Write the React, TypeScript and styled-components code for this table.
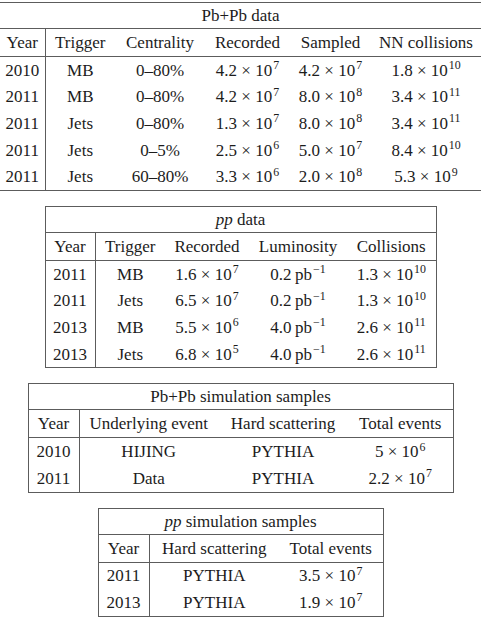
import { ReactNode } from 'react';
import styled, { createGlobalStyle } from 'styled-components';

const GlobalStyle = createGlobalStyle`
  html, body {
    margin: 0;
    padding: 0;
    background: #ffffff;
  }
  body {
    font-family: "Liberation Serif", "Times New Roman", serif;
    color: #1c1c1c;
  }
`;

const Page = styled.div`
  display: flex;
  flex-direction: column;
  align-items: center;
  gap: 15px;
  padding-top: 2px;
  width: 481px;
`;

const Table = styled.table<{ $open?: boolean }>`
  border-collapse: collapse;
  table-layout: fixed;
  font-size: 17px;
  line-height: 19px;
  border-top: 1px solid #5c5c5c;
  border-bottom: 1px solid #5c5c5c;
  border-left: ${(p) => (p.$open ? 'none' : '1px solid #5c5c5c')};
  border-right: ${(p) => (p.$open ? 'none' : '1px solid #5c5c5c')};
`;

const Col = styled.col<{ $w: number }>`
  width: ${(p) => p.$w}px;
`;

const Title = styled.td`
  height: 25px;
  padding: 0;
  text-align: center;
  vertical-align: middle;
  border-bottom: 1px solid #5c5c5c;
  white-space: nowrap;
`;

const Cell = styled.td<{ $divider?: boolean; $head?: boolean }>`
  height: ${(p) => (p.$head ? '27px' : '26.6px')};
  padding: 0;
  text-align: center;
  vertical-align: middle;
  white-space: nowrap;
  border-right: ${(p) => (p.$divider ? '1px solid #5c5c5c' : 'none')};
  border-bottom: ${(p) => (p.$head ? '1px solid #5c5c5c' : 'none')};
`;

const Sup = styled.sup`
  font-size: 0.7em;
  line-height: 0;
  vertical-align: 0.55em;
  margin-left: 1px;
`;

const Em = styled.i`
  font-style: italic;
`;

const sci = (m: string, e: string) => (
  <>
    {m} × 10<Sup>{e}</Sup>
  </>
);

const lumi = (v: string) => (
  <>
    {v}{'\u2009'}pb<Sup>−1</Sup>
  </>
);

type TableDef = {
  title: ReactNode;
  widths: number[];
  head: string[];
  rows: ReactNode[][];
  open?: boolean;
};

const tables: TableDef[] = [
  {
    title: 'Pb+Pb data',
    open: true,
    widths: [45, 70, 90, 85, 81, 110],
    head: ['Year', 'Trigger', 'Centrality', 'Recorded', 'Sampled', 'NN collisions'],
    rows: [
      ['2010', 'MB', '0–80%', sci('4.2', '7'), sci('4.2', '7'), sci('1.8', '10')],
      ['2011', 'MB', '0–80%', sci('4.2', '7'), sci('8.0', '8'), sci('3.4', '11')],
      ['2011', 'Jets', '0–80%', sci('1.3', '7'), sci('8.0', '8'), sci('3.4', '11')],
      ['2011', 'Jets', '0–5%', sci('2.5', '6'), sci('5.0', '7'), sci('8.4', '10')],
      ['2011', 'Jets', '60–80%', sci('3.3', '6'), sci('2.0', '8'), sci('5.3', '9')],
    ],
  },
  {
    title: (
      <>
        <Em>pp</Em> data
      </>
    ),
    widths: [50, 70, 84, 98, 89],
    head: ['Year', 'Trigger', 'Recorded', 'Luminosity', 'Collisions'],
    rows: [
      ['2011', 'MB', sci('1.6', '7'), lumi('0.2'), sci('1.3', '10')],
      ['2011', 'Jets', sci('6.5', '7'), lumi('0.2'), sci('1.3', '10')],
      ['2013', 'MB', sci('5.5', '6'), lumi('4.0'), sci('2.6', '11')],
      ['2013', 'Jets', sci('6.8', '5'), lumi('4.0'), sci('2.6', '11')],
    ],
  },
  {
    title: 'Pb+Pb simulation samples',
    widths: [51, 139, 130, 105],
    head: ['Year', 'Underlying event', 'Hard scattering', 'Total events'],
    rows: [
      ['2010', 'HIJING', 'PYTHIA', sci('5', '6')],
      ['2011', 'Data', 'PYTHIA', sci('2.2', '7')],
    ],
  },
  {
    title: (
      <>
        <Em>pp</Em> simulation samples
      </>
    ),
    widths: [51, 130, 104],
    head: ['Year', 'Hard scattering', 'Total events'],
    rows: [
      ['2011', 'PYTHIA', sci('3.5', '7')],
      ['2013', 'PYTHIA', sci('1.9', '7')],
    ],
  },
];

const DataTable = ({ def }: { def: TableDef }) => (
  <Table $open={def.open}>
    <colgroup>
      {def.widths.map((w, i) => (
        <Col key={i} $w={w} />
      ))}
    </colgroup>
    <tbody>
      <tr>
        <Title colSpan={def.widths.length}>{def.title}</Title>
      </tr>
      <tr>
        {def.head.map((h, i) => (
          <Cell key={i} $head $divider={i === 0}>
            {h}
          </Cell>
        ))}
      </tr>
      {def.rows.map((row, r) => (
        <tr key={r}>
          {row.map((c, i) => (
            <Cell key={i} $divider={i === 0}>
              {c}
            </Cell>
          ))}
        </tr>
      ))}
    </tbody>
  </Table>
);

const App = () => (
  <>
    <GlobalStyle />
    <Page>
      {tables.map((t, i) => (
        <DataTable key={i} def={t} />
      ))}
    </Page>
  </>
);

export default App;
